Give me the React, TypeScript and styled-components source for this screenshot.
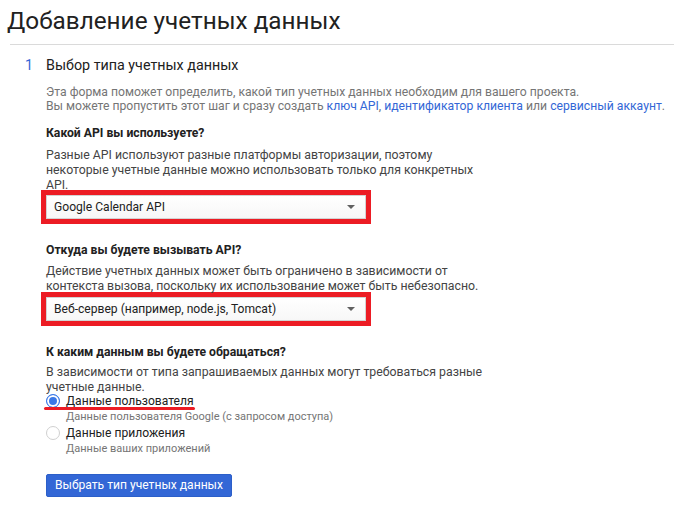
import React from 'react';
import styled, { createGlobalStyle } from 'styled-components';

const GlobalStyle = createGlobalStyle`
  body {
    margin: 0;
    background: #fff;
    font-family: Roboto, "Noto Sans", Arial, sans-serif;
    color: #212121;
  }
`;

const Page = styled.div`
  width: 674px;
  height: 511px;
  overflow: hidden;
`;

const Header = styled.div`
  padding: 5px 0 0 7px;
  height: 39px;
`;

const Title = styled.h1`
  margin: 0;
  font-size: 24.3px;
  font-weight: 400;
  line-height: 32px;
  color: #212121;
`;

const Divider = styled.div`
  margin-left: 10px;
  border-top: 1px solid #dadada;
`;

const Step = styled.div`
  display: flex;
  padding-top: 11px;
`;

const StepNumber = styled.div`
  width: 21px;
  padding-left: 25px;
  font-size: 14.3px;
  line-height: 18px;
  color: #3367d6;
`;

const StepBody = styled.div`
  flex: 1;
`;

const StepTitle = styled.div`
  font-size: 14.3px;
  line-height: 18px;
  color: #212121;
`;

const Intro = styled.p`
  margin: 11px 0 0;
  font-size: 12.2px;
  line-height: 14px;
  color: #757575;
`;

const Link = styled.a`
  color: #3367d6;
  text-decoration: none;
`;

const Question = styled.div<{ $gap: number }>`
  margin-top: ${(p) => p.$gap}px;
`;

const Label = styled.div`
  font-size: 12.2px;
  font-weight: 700;
  line-height: 16px;
  color: #212121;
`;

const Hint = styled.p<{ $top: number; $bottom: number }>`
  margin: ${(p) => p.$top}px 0 ${(p) => p.$bottom}px;
  width: 442px;
  font-size: 12.3px;
  line-height: 15px;
  color: #444;
`;

const Highlight = styled.div`
  margin-left: -5px;
  width: 320px;
  border: 5px solid #ec1c24;
`;

const Select = styled.div`
  box-sizing: border-box;
  display: flex;
  align-items: center;
  justify-content: space-between;
  height: 24px;
  padding: 0 10px 0 7px;
  background: linear-gradient(#fff, #f7f7f7);
  border: 1px solid #d3d3d3;
  font-size: 12.1px;
  color: #212121;
`;

const Caret = styled.span`
  width: 0;
  height: 0;
  border-left: 4px solid transparent;
  border-right: 4px solid transparent;
  border-top: 4px solid #616161;
`;

const Options = styled.div`
  margin-top: -2px;
  display: flex;
  flex-direction: column;
`;

const Option = styled.label`
  display: grid;
  grid-template-columns: 20px auto;
  align-items: center;
`;

const Radio = styled.span<{ $checked?: boolean }>`
  box-sizing: border-box;
  width: 14px;
  height: 14px;
  border-radius: 50%;
  border: 1.5px solid ${(p) => (p.$checked ? '#3b78e7' : '#d0d0d0')};
  background: ${(p) => (p.$checked ? '#3b78e7' : '#fff')};
  box-shadow: ${(p) => (p.$checked ? 'inset 0 0 0 2px #fff' : 'none')};
`;

const OptionText = styled.span<{ $marked?: boolean }>`
  position: relative;
  justify-self: start;
  font-size: 12.1px;
  line-height: 16px;
  color: #212121;

  ${(p) =>
    p.$marked &&
    `&::after {
      content: '';
      position: absolute;
      left: -22px;
      right: -1px;
      bottom: -1px;
      height: 3px;
      border-radius: 2px;
      background: #ec1c24;
    }`}
`;

const OptionHint = styled.span`
  grid-column: 2;
  font-size: 11px;
  line-height: 16px;
  color: #757575;
`;

const Button = styled.button`
  margin-top: 17px;
  height: 23px;
  padding: 0 8px;
  border: 1px solid #2c5fc9;
  border-radius: 2px;
  background: #3367d6;
  color: #fff;
  font-family: Roboto, "Noto Sans", Arial, sans-serif;
  font-size: 12.1px;
  line-height: 21px;
`;

const radios = [
  { label: 'Данные пользователя', hint: 'Данные пользователя Google (с запросом доступа)', checked: true },
  { label: 'Данные приложения', hint: 'Данные ваших приложений', checked: false },
];

export default function App() {
  return (
    <Page>
      <GlobalStyle />
      <Header>
        <Title>Добавление учетных данных</Title>
      </Header>
      <Divider />

      <Step>
        <StepNumber>1</StepNumber>
        <StepBody>
          <StepTitle>Выбор типа учетных данных</StepTitle>
          <Intro>
            Эта форма поможет определить, какой тип учетных данных необходим для вашего проекта.
            <br />
            Вы можете пропустить этот шаг и сразу создать <Link href="#">ключ API</Link>,{' '}
            <Link href="#">идентификатор клиента</Link> или <Link href="#">сервисный аккаунт</Link>.
          </Intro>

          <Question $gap={12}>
            <Label>Какой API вы используете?</Label>
            <Hint $top={7} $bottom={-3}>
              Разные API используют разные платформы авторизации, поэтому некоторые учетные
              данные можно использовать только для конкретных API.
            </Hint>
            <Highlight>
              <Select>
                Google Calendar API
                <Caret />
              </Select>
            </Highlight>
          </Question>

          <Question $gap={18}>
            <Label>Откуда вы будете вызывать API?</Label>
            <Hint $top={6} $bottom={-2}>
              Действие учетных данных может быть ограничено в зависимости от контекста вызова,
              поскольку их использование может быть небезопасно.
            </Hint>
            <Highlight>
              <Select>
                Веб-сервер (например, node.js, Tomcat)
                <Caret />
              </Select>
            </Highlight>
          </Question>

          <Question $gap={18}>
            <Label>К каким данным вы будете обращаться?</Label>
            <Hint $top={5} $bottom={0}>
              В зависимости от типа запрашиваемых данных могут требоваться разные учетные данные.
            </Hint>
            <Options>
              {radios.map((r) => (
                <Option key={r.label}>
                  <Radio $checked={r.checked} />
                  <OptionText $marked={r.checked}>{r.label}</OptionText>
                  <OptionHint>{r.hint}</OptionHint>
                </Option>
              ))}
            </Options>
          </Question>

          <Button>Выбрать тип учетных данных</Button>
        </StepBody>
      </Step>
    </Page>
  );
}
